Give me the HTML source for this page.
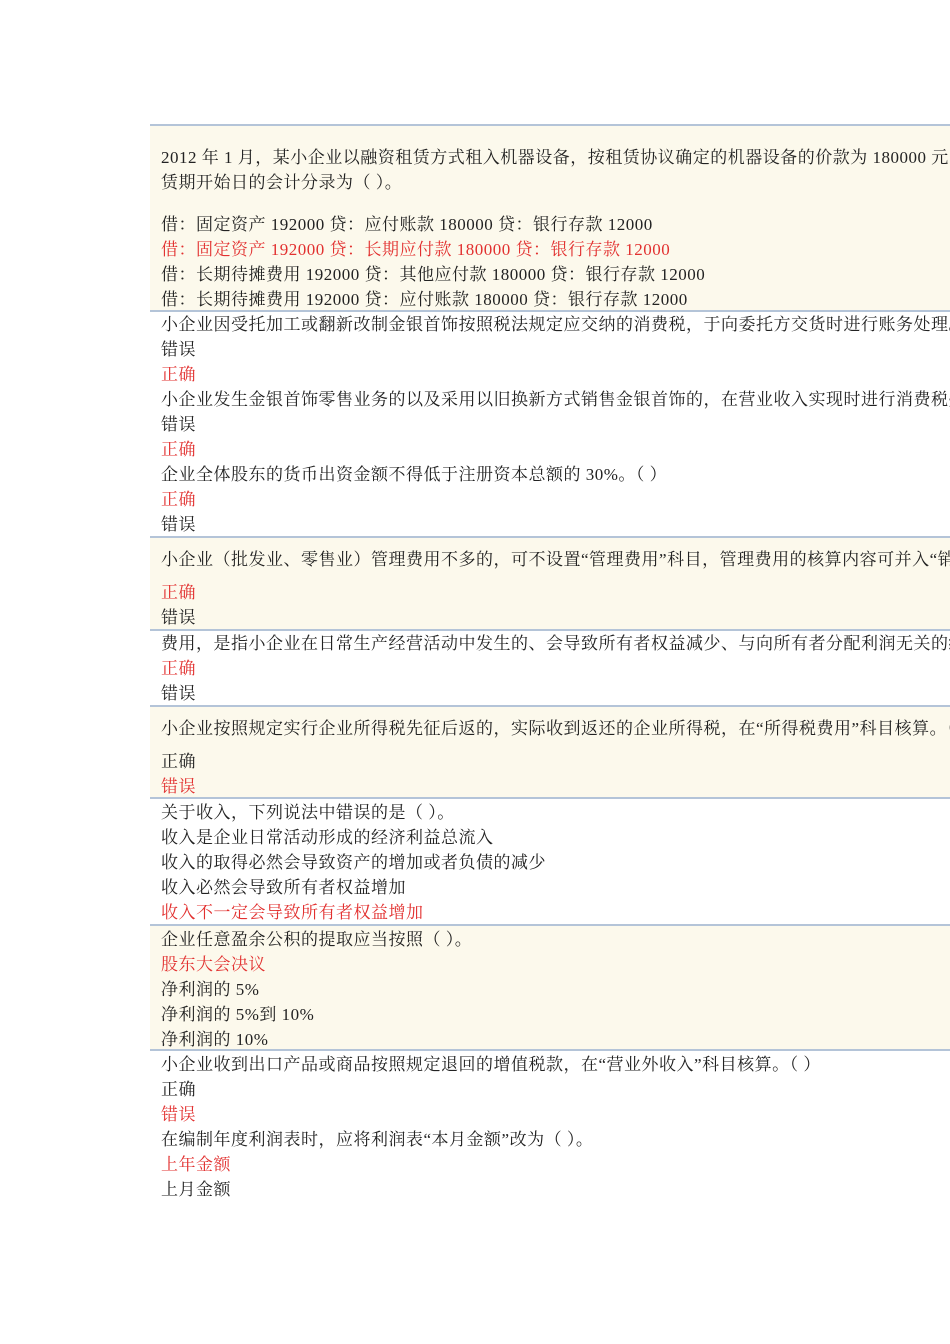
<!DOCTYPE html>
<html><head><meta charset="utf-8"><style>
html,body{margin:0;width:950px;height:1344px;overflow:hidden}
body{background:#fff;position:relative;font-family:"Liberation Serif","Noto Serif CJK SC",serif;font-size:17px;letter-spacing:0.5px;color:#222}
.wrap{position:absolute;left:0;top:0;width:950px;height:1344px;overflow:hidden}
.bg{position:absolute;left:150px;width:800px;background:#fcf9ec}
.ln{position:absolute;left:150px;width:800px;height:2px;background:#b4c4d8}
.t{position:absolute;left:161px;width:789px;overflow:hidden;white-space:nowrap;line-height:25px;height:25px}
.r{color:#e2302f}
</style></head><body><div class="wrap">
<div class="bg" style="top:125px;height:186px"></div>
<div class="bg" style="top:537px;height:92px"></div>
<div class="bg" style="top:706px;height:92px"></div>
<div class="bg" style="top:925px;height:125px"></div>
<div class="ln" style="top:124px"></div>
<div class="ln" style="top:310px"></div>
<div class="ln" style="top:536px"></div>
<div class="ln" style="top:629px"></div>
<div class="ln" style="top:705px"></div>
<div class="ln" style="top:797px"></div>
<div class="ln" style="top:924px"></div>
<div class="ln" style="top:1049px"></div>

<div class="t" style="top:145px">2012 年 1 月，某小企业以融资租赁方式租入机器设备，按租赁协议确定的机器设备的价款为 180000 元，另发生运输费、途中保险费</div>
<div class="t" style="top:170px">赁期开始日的会计分录为（ ）。</div>
<div class="t" style="top:212px">借：固定资产 192000 贷：应付账款 180000 贷：银行存款 12000</div>
<div class="t r" style="top:237px">借：固定资产 192000 贷：长期应付款 180000 贷：银行存款 12000</div>
<div class="t" style="top:262px">借：长期待摊费用 192000 贷：其他应付款 180000 贷：银行存款 12000</div>
<div class="t" style="top:287px">借：长期待摊费用 192000 贷：应付账款 180000 贷：银行存款 12000</div>
<div class="t" style="top:312px">小企业因受托加工或翻新改制金银首饰按照税法规定应交纳的消费税，于向委托方交货时进行账务处理。（ ）</div>
<div class="t" style="top:337px">错误</div>
<div class="t r" style="top:362px">正确</div>
<div class="t" style="top:387px">小企业发生金银首饰零售业务的以及采用以旧换新方式销售金银首饰的，在营业收入实现时进行消费税处理。</div>
<div class="t" style="top:412px">错误</div>
<div class="t r" style="top:437px">正确</div>
<div class="t" style="top:462px">企业全体股东的货币出资金额不得低于注册资本总额的 30%。（ ）</div>
<div class="t r" style="top:487px">正确</div>
<div class="t" style="top:512px">错误</div>
<div class="t" style="top:547px">小企业（批发业、零售业）管理费用不多的，可不设置“管理费用”科目，管理费用的核算内容可并入“销售费用”</div>
<div class="t r" style="top:580px">正确</div>
<div class="t" style="top:605px">错误</div>
<div class="t" style="top:631px">费用，是指小企业在日常生产经营活动中发生的、会导致所有者权益减少、与向所有者分配利润无关的经济利益</div>
<div class="t r" style="top:656px">正确</div>
<div class="t" style="top:681px">错误</div>
<div class="t" style="top:716px">小企业按照规定实行企业所得税先征后返的，实际收到返还的企业所得税，在“所得税费用”科目核算。（ ）</div>
<div class="t" style="top:749px">正确</div>
<div class="t r" style="top:774px">错误</div>
<div class="t" style="top:800px">关于收入，下列说法中错误的是（ ）。</div>
<div class="t" style="top:825px">收入是企业日常活动形成的经济利益总流入</div>
<div class="t" style="top:850px">收入的取得必然会导致资产的增加或者负债的减少</div>
<div class="t" style="top:875px">收入必然会导致所有者权益增加</div>
<div class="t r" style="top:900px">收入不一定会导致所有者权益增加</div>
<div class="t" style="top:927px">企业任意盈余公积的提取应当按照（ ）。</div>
<div class="t r" style="top:952px">股东大会决议</div>
<div class="t" style="top:977px">净利润的 5%</div>
<div class="t" style="top:1002px">净利润的 5%到 10%</div>
<div class="t" style="top:1027px">净利润的 10%</div>
<div class="t" style="top:1052px">小企业收到出口产品或商品按照规定退回的增值税款，在“营业外收入”科目核算。（ ）</div>
<div class="t" style="top:1077px">正确</div>
<div class="t r" style="top:1102px">错误</div>
<div class="t" style="top:1127px">在编制年度利润表时，应将利润表“本月金额”改为（ ）。</div>
<div class="t r" style="top:1152px">上年金额</div>
<div class="t" style="top:1177px">上月金额</div>
</div></body></html>
